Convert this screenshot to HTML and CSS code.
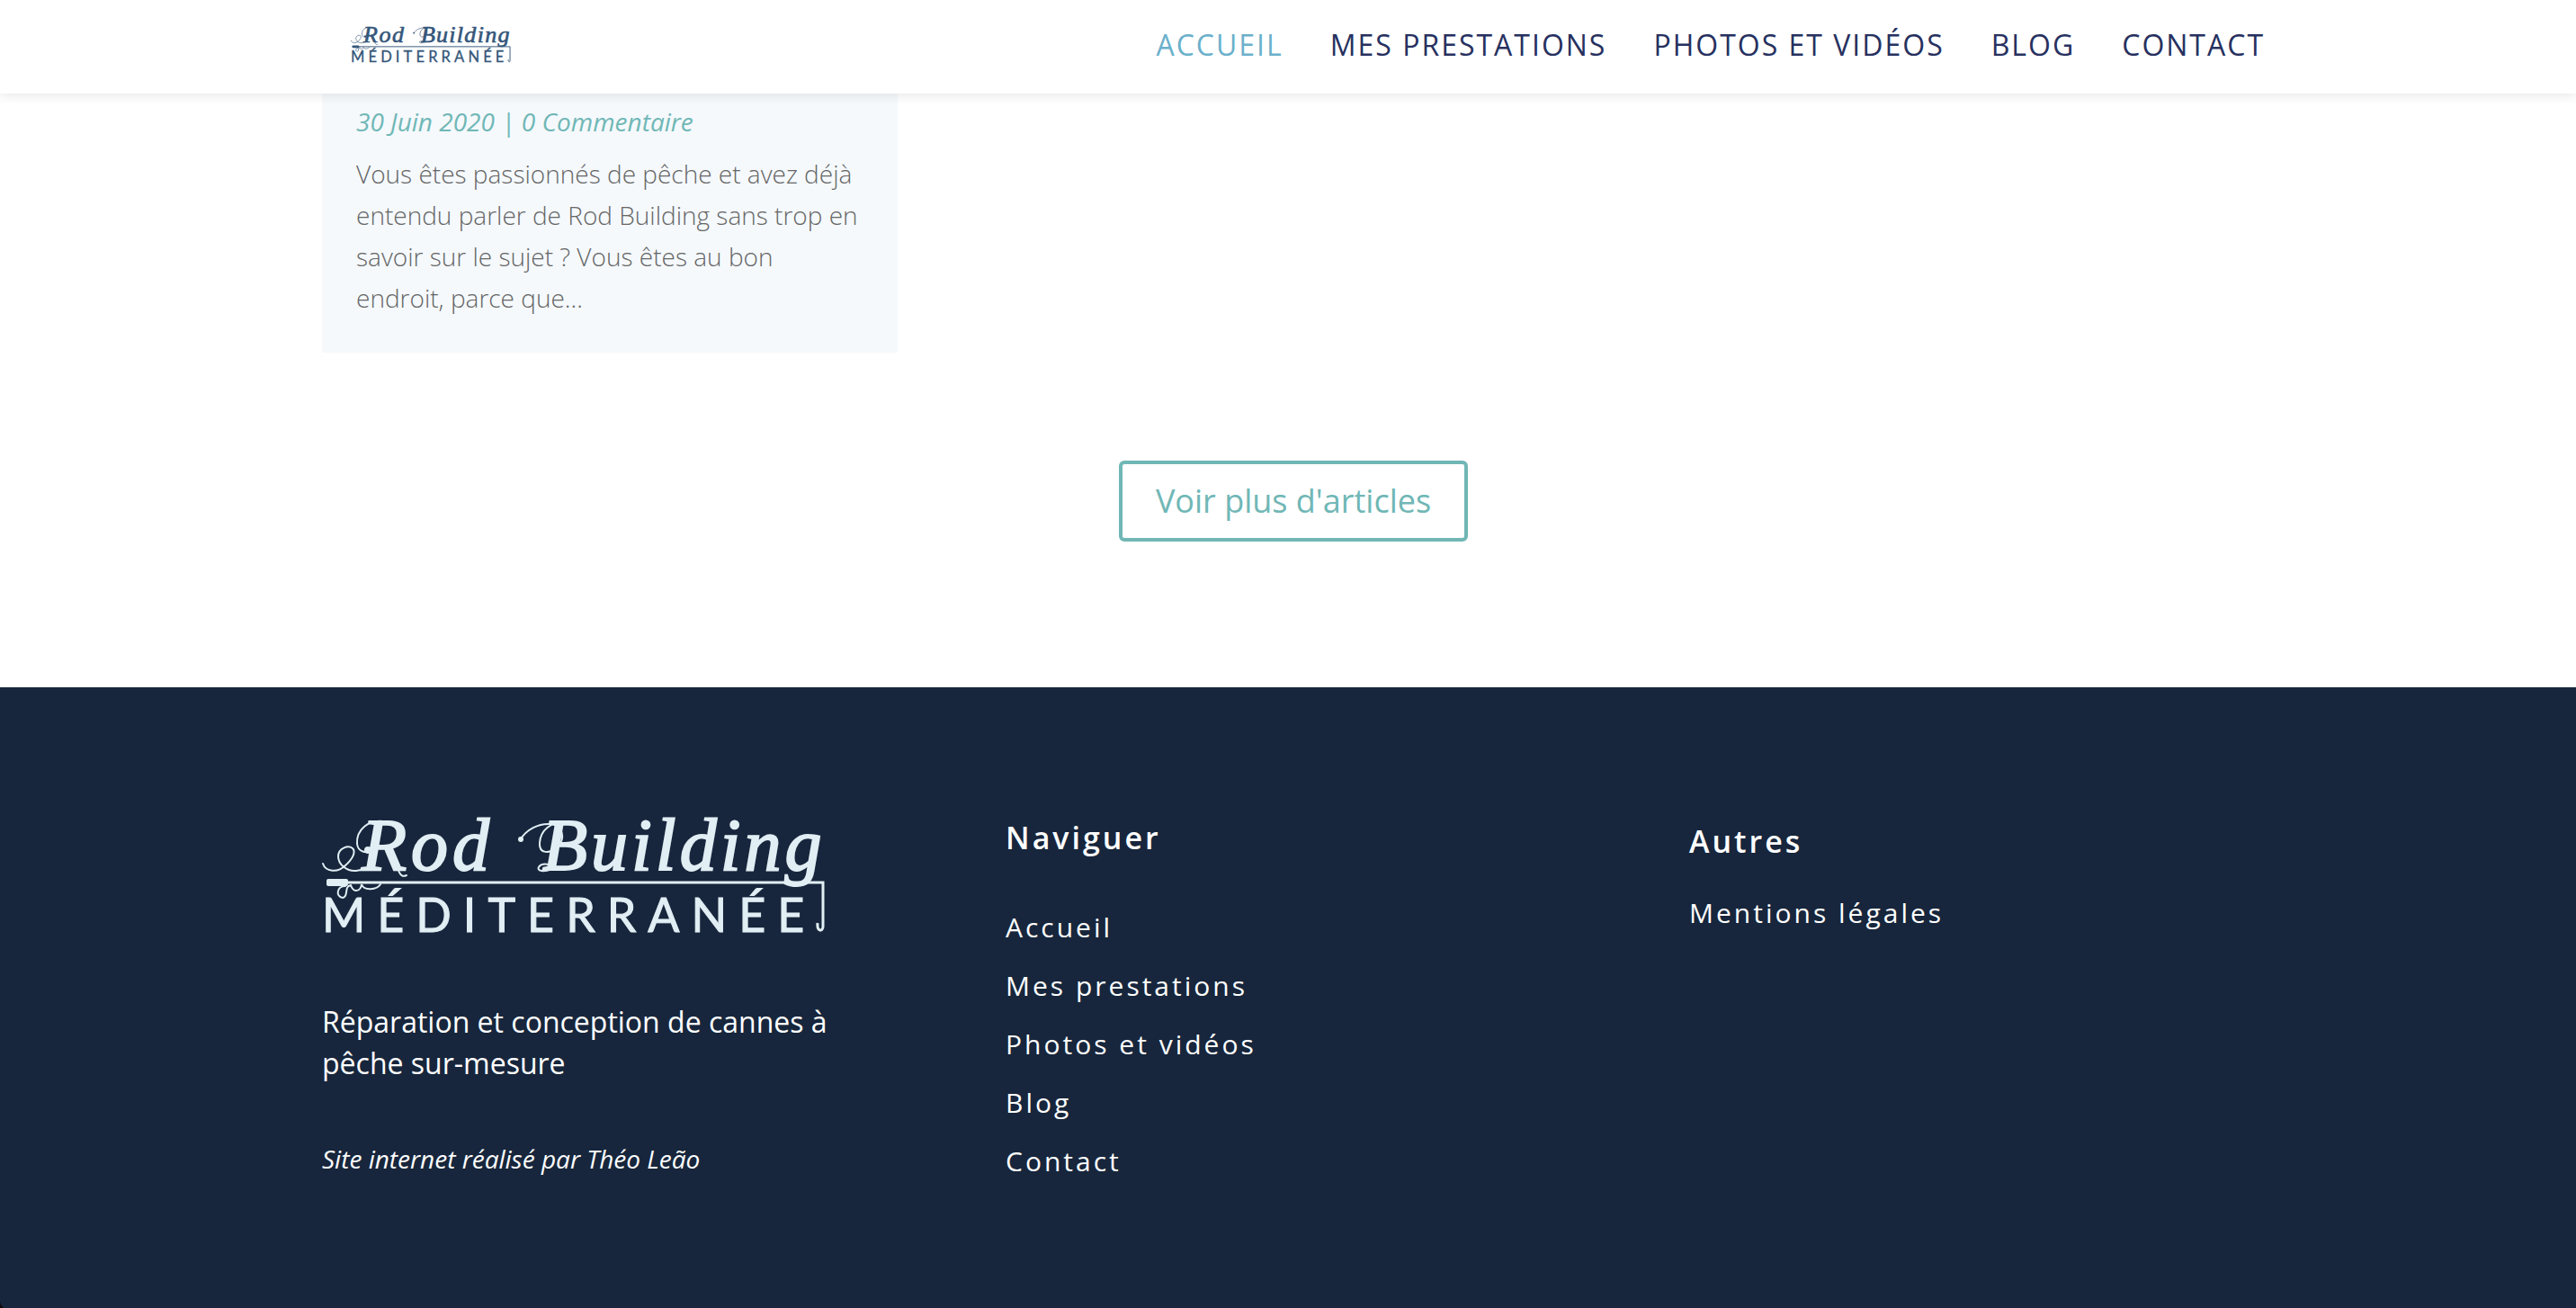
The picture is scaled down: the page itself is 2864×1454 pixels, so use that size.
FILE: index.html
```html
<!DOCTYPE html>
<html lang="fr">
<head>
<meta charset="utf-8">
<meta name="viewport" content="width=device-width, initial-scale=1">
<title>Rod Building Méditerranée</title>
<link rel="stylesheet" href="styles.css">
</head>
<body>
<header class="site-header">
  <div class="container site-header__inner">
    <a class="brand" href="#" aria-label="Rod Building Méditerranée">
      <svg class="brand__logo" viewBox="0 0 560 130">
        <g id="logo">
          <g fill="currentColor">
            <text class="logo-script" x="44" y="60" letter-spacing="5">Rod</text>
            <text class="logo-script" x="245" y="60" letter-spacing="4">Building</text>
            <text class="logo-caps" x="0" y="129" letter-spacing="13">MÉDITERRANÉE</text>
            <rect x="5" y="70" width="24" height="8" rx="2"/>
            <circle cx="51" cy="38" r="4"/>
            <circle cx="221" cy="26" r="3"/>
          </g>
          <g fill="none" stroke="currentColor" stroke-width="2" stroke-linecap="round">
            <path d="M1 53C4 62 17 64 26 55C34 48 38 40 34 36C29 32 18 36 18 45C18 54 28 62 38 61C44 60 48 59 52 58"/>
            <path d="M54 36C50 43 40 40 39 31C38 15 52 4 68 6"/>
            <path d="M84 58C87 67 90 68 94 66"/>
            <path d="M220 27C227 15 241 8 254 9C268 11 271 25 262 34C253 43 241 42 242 30C243 15 255 7 270 6"/>
            <path d="M252 54C241 52 237 60 244 61C251 62 257 58 261 58"/>
            <path d="M26 78C16 78 15 90 23 91C30 90 24 78 32 77C35 86 43 84 44 76C47 84 61 82 65 76"/>
          </g>
          <path d="M28 74H557V123C557 129 550 129 551 119" fill="none" stroke="currentColor" stroke-width="3"/>
        </g>
      </svg>
    </a>
    <nav class="main-nav" aria-label="Navigation principale">
      <a class="main-nav__link main-nav__link--active" href="#">ACCUEIL</a>
      <a class="main-nav__link" href="#">MES PRESTATIONS</a>
      <a class="main-nav__link" href="#">PHOTOS ET VIDÉOS</a>
      <a class="main-nav__link" href="#">BLOG</a>
      <a class="main-nav__link" href="#">CONTACT</a>
    </nav>
  </div>
</header>

<main class="articles">
  <div class="container">
    <div class="columns">
      <article class="card">
        <p class="card__meta">30 Juin 2020 | 0 Commentaire</p>
        <p class="card__text">Vous êtes passionnés de pêche et avez déjà entendu parler de Rod Building sans trop en savoir sur le sujet ? Vous êtes au bon endroit, parce que...</p>
      </article>
    </div>
    <div class="more">
      <a class="more__button" href="#">Voir plus d'articles</a>
    </div>
  </div>
</main>

<footer class="site-footer">
  <div class="container columns">
    <div class="about">
      <svg class="about__logo" viewBox="0 0 560 130" role="img" aria-label="Rod Building Méditerranée"><use href="#logo"/></svg>
      <p class="about__text">Réparation et conception de cannes à pêche sur-mesure</p>
      <p class="about__credit">Site internet réalisé par Théo Leão</p>
    </div>
    <nav class="links" aria-labelledby="nav-title">
      <h2 class="links__title" id="nav-title">Naviguer</h2>
      <ul class="links__list">
        <li><a href="#">Accueil</a></li>
        <li><a href="#">Mes prestations</a></li>
        <li><a href="#">Photos et vidéos</a></li>
        <li><a href="#">Blog</a></li>
        <li><a href="#">Contact</a></li>
      </ul>
    </nav>
    <nav class="links links--other" aria-labelledby="other-title">
      <h2 class="links__title" id="other-title">Autres</h2>
      <ul class="links__list">
        <li><a href="#">Mentions légales</a></li>
      </ul>
    </nav>
  </div>
</footer>
</body>
</html>
```
FILE: styles.css
```css
:root {
  --navy: #17263c;
  --teal: #70b7b6;
  --ink: #273160;
}

* {
  box-sizing: border-box;
}

html {
  background: #12080c;
}

body {
  margin: 0;
  font-family: "Open Sans", "Noto Sans", sans-serif;
  font-size: 28px;
  line-height: 46px;
}

p,
h2,
ul {
  margin: 0;
  padding: 0;
}

a {
  color: inherit;
  text-decoration: none;
}

.logo-script {
  font: italic 400 82px "Liberation Serif", serif;
  stroke: currentColor;
  stroke-width: 2px;
}

.logo-caps {
  font: 400 52px Lato, sans-serif;
  stroke: currentColor;
  stroke-width: 1px;
}

.site-header,
.articles,
.site-footer {
  padding-left: 12px;
}

.container {
  width: 92%;
  max-width: 2160px;
  margin: 0 auto;
}

.columns {
  display: grid;
  grid-template-columns: repeat(3, 1fr);
  column-gap: 120px;
  align-items: start;
}

.site-header {
  position: sticky;
  top: 0;
  z-index: 1;
  background: #fff;
  box-shadow: 0 2px 12px rgba(0, 0, 0, 0.1);
}

.site-header__inner {
  display: flex;
  align-items: center;
  justify-content: space-between;
  min-height: 104px;
  padding: 0 0 6px 32px;
}

.brand {
  color: #34567a;
}

.brand__logo {
  display: block;
  width: 178px;
  height: 42px;
  overflow: visible;
}

.main-nav {
  display: flex;
  gap: 52px;
  padding-top: 2px;
  color: var(--ink);
  font-size: 32px;
  letter-spacing: 2px;
}

.main-nav__link--active {
  color: #6bb0cb;
}

.articles {
  padding-bottom: 162px;
  background: #fff;
}

.card {
  padding: 8px 38px 38px;
  background: #f5f9fc;
}

.card__meta {
  margin-bottom: 12px;
  color: var(--teal);
  font-style: italic;
}

.card__text {
  color: #666;
  font-weight: 300;
}

.more {
  display: flex;
  justify-content: center;
  margin-top: 120px;
}

.more__button {
  padding: 18px 37px;
  border: 4px solid var(--teal);
  border-radius: 6px;
  color: var(--teal);
  font-size: 36px;
}

.site-footer {
  padding-top: 143px;
  padding-bottom: 142px;
  border-bottom-left-radius: 10px;
  background: var(--navy);
  color: #fff;
}

.about__logo {
  display: block;
  width: 560px;
  height: 130px;
  max-width: 100%;
  overflow: visible;
  color: #e1eef4;
}

.about__text {
  margin-top: 76px;
  font-size: 32px;
}

.about__credit {
  margin-top: 60px;
  font-style: italic;
}

.links {
  padding-top: 1px;
}

.links__title {
  margin: 0 0 54px;
  font-size: 34px;
  font-weight: 600;
  letter-spacing: 3px;
}

.links__list {
  display: grid;
  gap: 19px;
  list-style: none;
  font-size: 30px;
  letter-spacing: 3px;
}

.links--other {
  padding-top: 5px;
}

.links--other .links__title {
  margin-bottom: 34px;
}
```
